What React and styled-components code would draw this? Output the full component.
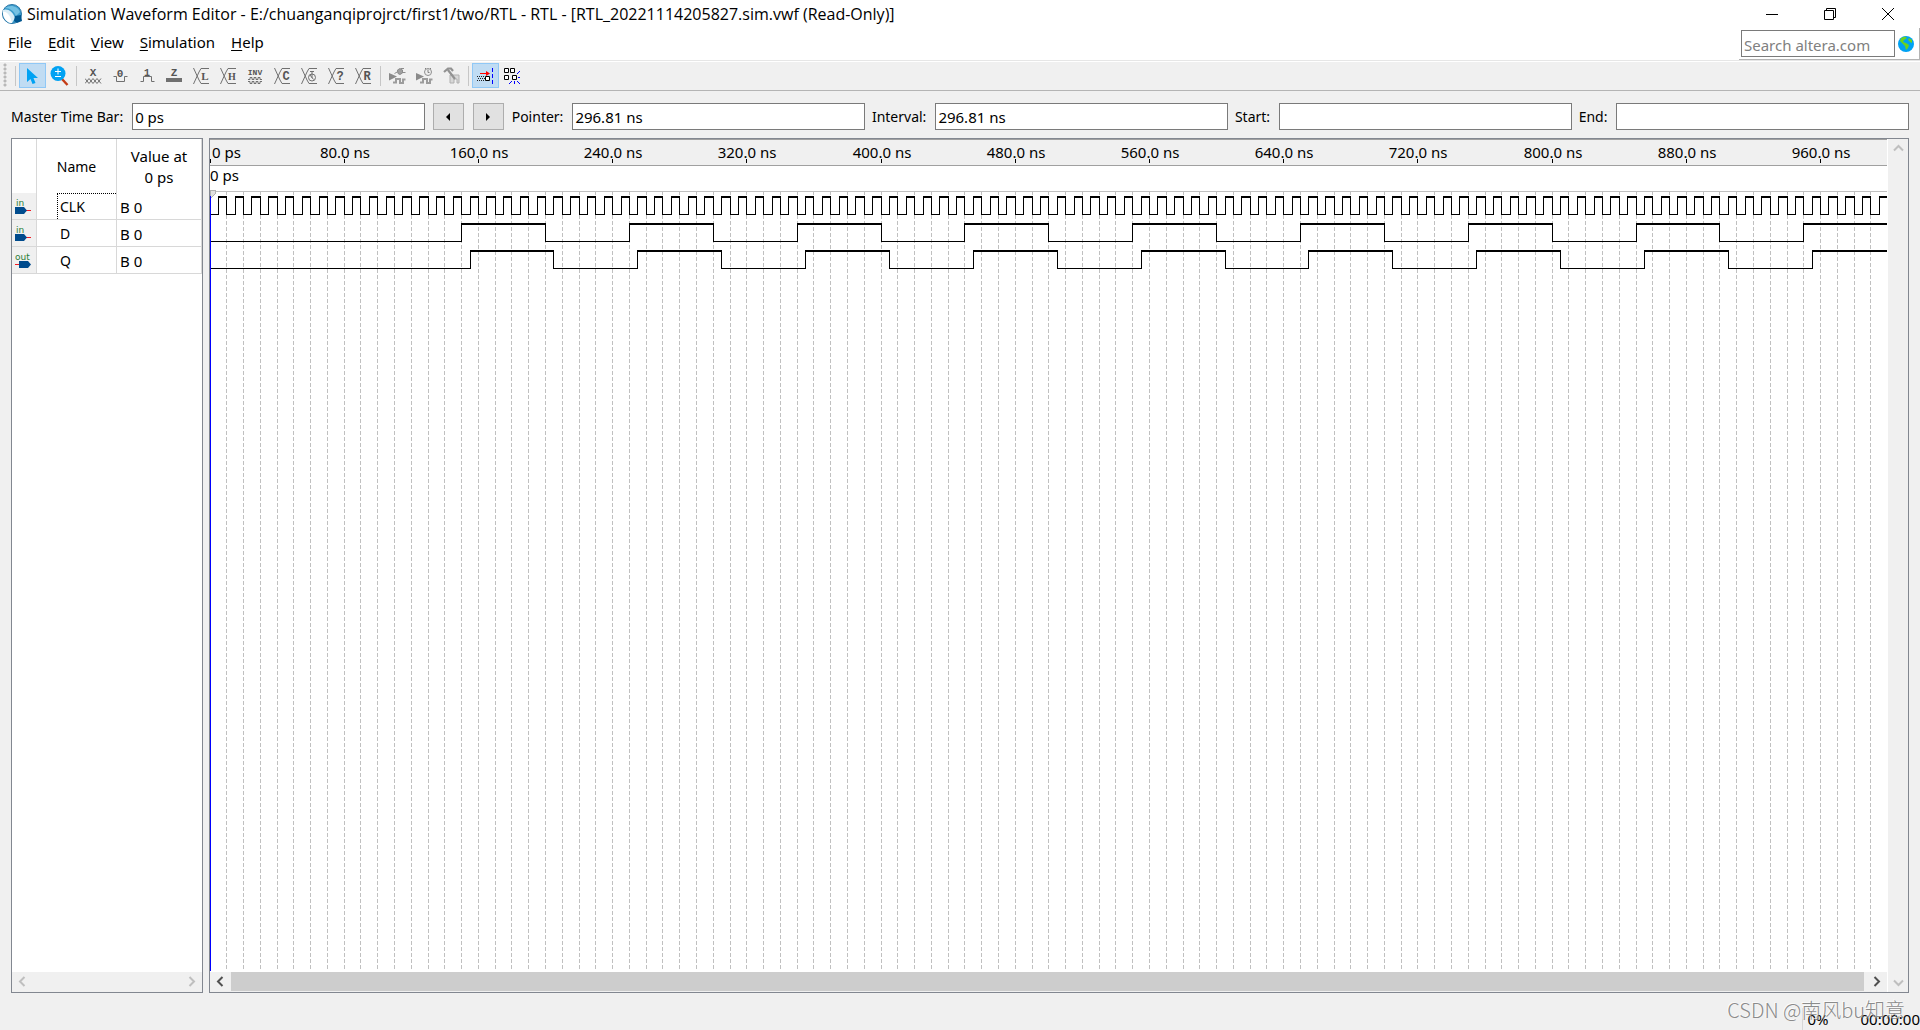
import React from 'react';
import styled, { createGlobalStyle } from 'styled-components';

const COLORS = {
  face: '#f0f0f0',
  frame: '#828790',
  input: '#7a7a7a',
  line: '#b4b4b4',
  cell: '#d8d8d8',
  grid: '#c0c0c0',
  icon: '#707070',
  pressed: '#c0dcf3',
  pressedBorder: '#90c8f6',
  blue: '#00a2f3',
  pin: '#004b8d',
};

const FONT = "'Noto Sans', 'Noto Sans CJK SC', sans-serif";

const GlobalStyle = createGlobalStyle`
  *, *::before, *::after {
    box-sizing: border-box;
  }
  body {
    margin: 0;
    background: ${COLORS.face};
    color: #000;
    font: 14px/20px ${FONT};
  }
  button, input {
    font: inherit;
    color: inherit;
    margin: 0;
  }
`;

const MENU = ['File', 'Edit', 'View', 'Simulation', 'Help'];

const SIGNALS = [
  { name: 'CLK', value: 'B 0', dir: 'in', first: 5, high: 5, period: 10 },
  { name: 'D', value: 'B 0', dir: 'in', first: 150, high: 50, period: 100 },
  { name: 'Q', value: 'B 0', dir: 'out', first: 155, high: 50, period: 100 },
];

const END_TIME = 1000;

/* ---------- toolbar icons ---------- */

const Glyph = ({ children, size = 17 }) => (
  <svg width={size} height={size} viewBox={`0 0 ${size} ${size}`} fill="none" stroke={COLORS.icon} aria-hidden="true">
    {children}
  </svg>
);

const Letter = ({ x = 8, y = 9, size = 10, family = 'Liberation Mono', weight = 700, children }) => (
  <text x={x} y={y} fontSize={size} fontFamily={`'${family}', monospace`} fontWeight={weight} textAnchor="middle" fill="#555" stroke="none">
    {children}
  </text>
);

const Bus = ({ children }) => (
  <Glyph>
    <path d="M0.500 1L6 13L8 16.500H16M0.500 17L6 5L8 1.500H16" />
    {children}
  </Glyph>
);

const PulseBase = () => (
  <>
    <path d="M0 6V13.500L8 9.500Z" fill="#8a8a8a" stroke="none" />
    <path d="M4 15.500H7V12H11V16H14V12.500H16.500" stroke="#9c9c9c" strokeWidth="2" />
  </>
);

const ICONS = {
  select: (
    <Glyph>
      <path d="M3 1V15L6.500 12L8.500 17L11.500 16L9.500 11H14Z" fill={COLORS.blue} stroke="none" />
    </Glyph>
  ),
  zoom: (
    <svg width="19" height="21" viewBox="0 0 19 21" fill="none" aria-hidden="true">
      <path d="M12 14L17.500 20" stroke="#c43c16" strokeWidth="2.400" />
      <circle cx="8" cy="8.500" r="7.500" fill={COLORS.blue} />
      <path d="M5 6.500H11M8 3.500V9.500M5 11.500H11" stroke="#fff" />
    </svg>
  ),
  unknown: (
    <Glyph>
      <Letter size={11}>X</Letter>
      <path d="M0 11.500L4 16.500L8 11.500L12 16.500L16 11.500M0 16.500L4 11.500L8 16.500L12 11.500L16 16.500" />
    </Glyph>
  ),
  low: (
    <Glyph>
      <Letter y={10} size={11}>0</Letter>
      <path d="M1.500 9.500H4.500V14.500H12.500V9.500H15.500" />
    </Glyph>
  ),
  high: (
    <Glyph>
      <Letter y={9} size={10}>1</Letter>
      <path d="M1.500 14.500H4.500V9.500H12.500V14.500H15.500" />
    </Glyph>
  ),
  highZ: (
    <Glyph>
      <Letter size={11}>Z</Letter>
      <path d="M0 11H16V15H0Z" fill={COLORS.icon} stroke="none" />
    </Glyph>
  ),
  weakLow: <Bus><Letter x={12} y={13} size={11} family="Liberation Serif">L</Letter></Bus>,
  weakHigh: <Bus><Letter x={12} y={13} size={10} family="Liberation Serif">H</Letter></Bus>,
  invert: (
    <Glyph>
      <Letter y={8} size={8}>INV</Letter>
      <path d="M1 12.500H3V10.500H5V12.500H7V10.500H9V12.500H11V10.500H13V12.500H15M1 14.500H3V16.500H5V14.500H7V16.500H9V14.500H11V16.500H13V14.500H15" />
    </Glyph>
  ),
  count: <Bus><Letter x={12} y={13} size={12}>C</Letter></Bus>,
  clock: (
    <Bus>
      <circle cx="11" cy="10.500" r="3.500" />
      <path d="M11 4V11M9 4.500H13M9 8L12.500 12.500" />
    </Bus>
  ),
  arbitrary: <Bus><Letter x={12} y={13} size={12}>?</Letter></Bus>,
  random: <Bus><Letter x={12} y={13} size={12}>R</Letter></Bus>,
  functional: (
    <Glyph>
      <PulseBase />
      <path d="M5.500 6.500L9 4.500" stroke="#8c8c8c" />
      <path d="M8.500 3L11 1.500L13.500 3V6L11 7.500L9 6.500Z" fill="#a0a0a0" stroke="#8c8c8c" />
      <path d="M12 1.500H15M13 5.500H16.500" stroke="#8c8c8c" />
    </Glyph>
  ),
  timing: (
    <Glyph>
      <PulseBase />
      <circle cx="12" cy="5" r="3.500" fill="#eee" stroke="#909090" />
      <path d="M12 2.500V5.500H13.500M9 1L10 2M15 1L14 2" stroke="#808080" />
    </Glyph>
  ),
  testbench: (
    <Glyph>
      <path d="M7 16V8H16V16H14V12H11V16Z" fill="#d8d8d8" stroke="#b0b0b0" />
      <path d="M1 5L5 1.500H8L10 4M5 3L12 12" stroke="#929292" strokeWidth="2.200" />
    </Glyph>
  ),
  snapGrid: (
    <Glyph>
      <path d="M3 6.500H10" stroke="#f00" />
      <path d="M9 4L13 6.500L9 9Z" fill="#f00" stroke="none" />
      <path d="M0 9.500H8M0 13.500H8M1 11.500H8" stroke="#222" strokeDasharray="1 1" />
      <path d="M8.500 9.500H12.500V13.500H8.500Z" stroke="#000" fill="#fff" />
      <path d="M15.500 1V17" stroke="#00f" strokeDasharray="4 2" />
    </Glyph>
  ),
  snapEdge: (
    <Glyph>
      <path d="M0.500 1.500H4.500V5.500H0.500ZM6.500 1.500H10.500V5.500H6.500ZM0.500 8.500H4.500V12.500H0.500ZM8.500 8.500H12.500V12.500H8.500Z" stroke="#000" fill="#fff" />
      <path d="M13 7L16 4M14 10.500H16M13 14L16 17M10.500 14V17M8 14L5 17" stroke="#00f" />
    </Glyph>
  ),
};

const TOOL_GROUPS = [
  [
    ['select', 'Selection Tool', true],
    ['zoom', 'Zoom Tool'],
  ],
  [
    ['unknown', 'Forcing Unknown (X)'],
    ['low', 'Forcing Low (0)'],
    ['high', 'Forcing High (1)'],
    ['highZ', 'High Impedance (Z)'],
    ['weakLow', 'Weak Low (L)'],
    ['weakHigh', 'Weak High (H)'],
    ['invert', 'Invert'],
    ['count', 'Count Value'],
    ['clock', 'Overwrite Clock'],
    ['arbitrary', 'Arbitrary Value'],
    ['random', 'Random Values'],
  ],
  [
    ['functional', 'Run Functional Simulation'],
    ['timing', 'Run Timing Simulation'],
    ['testbench', 'Generate ModelSim Testbench'],
  ],
  [
    ['snapGrid', 'Snap to Grid', true],
    ['snapEdge', 'Snap to Transition'],
  ],
];

const AppIcon = () => (
  <svg width="22" height="22" viewBox="0 0 22 22" aria-hidden="true">
    <circle cx="11" cy="11" r="9.500" fill="#3b9ccc" stroke="#2b76a6" />
    <path d="M2 7C6 5 12 8 14 15L11 20C5 20 1 14 2 7Z" fill="#d9edf7" />
    <path d="M4 5C9 1 17 3 19 9L15 13C13 8 9 5 4 5Z" fill="#74c1e3" />
    <path d="M2 9C5 8 9 11 11 20C6 20 2 15 2 9Z" fill="#fff" />
    <path d="M14 13L20 12L21 18L16 20L13 18Z" fill="#00568f" />
  </svg>
);

const Globe = () => (
  <svg width="16" height="16" viewBox="0 0 16 16" aria-hidden="true">
    <circle cx="8" cy="8" r="8" fill="#00a2f3" />
    <path d="M3 2L7 0.500L9 2L6 4L5 6L8 7L11 9L10 12L8 14L7 10L4 7L2 5ZM11 2L14 4L14 7L12 6L10 4Z" fill="#6cd21e" />
  </svg>
);

const PinIcon = ({ dir }) => (
  <svg width="18" height="18" viewBox="0 0 18 18" role="img" aria-label={dir}>
    <text x={dir === 'in' ? 1 : 0} y="8" fontSize="9" fontFamily="'DejaVu Sans', sans-serif" fill="#2b7d35">{dir}</text>
    {dir === 'in' ? (
      <>
        <path d="M11 12.500H16" stroke="#f01c24" />
        <path d="M0 9H9L12 12.500L9 16H0Z" fill={COLORS.pin} />
      </>
    ) : (
      <>
        <path d="M0 12.500H5" stroke="#f01c24" />
        <path d="M4 9H13L16 12.500L13 16H4Z" fill={COLORS.pin} />
      </>
    )}
  </svg>
);

const CHEVRONS = {
  left: 'M7.500 1L3 5.500L7.500 10',
  right: 'M3.500 1L8 5.500L3.500 10',
  up: 'M1 7.500L5.500 3L10 7.500',
  down: 'M1 3.500L5.500 8L10 3.500',
};

const ScrollArrow = ({ to, active }) => (
  <ArrowButton type="button" aria-label={`Scroll ${to}`} disabled={!active}>
    <svg width="11" height="11" viewBox="0 0 11 11" fill="none" stroke={active ? '#505050' : '#bfbfbf'} strokeWidth="2">
      <path d={CHEVRONS[to]} />
    </svg>
  </ArrowButton>
);

/* ---------- waveforms ---------- */

function tracePath(signal, toX, top) {
  const low = top + 18.5;
  let d = `M0 ${low}`;
  let tops = '';
  for (let t = signal.first; t < END_TIME; t += signal.period) {
    const rise = toX(t) + 0.5;
    const stop = Math.min(t + signal.high, END_TIME);
    const fall = toX(stop) + 0.5;
    d += `H${rise}V${top}`;
    tops += `M${rise - 0.5} ${top + 1}H${fall + 0.5}`;
    d += stop < END_TIME ? `M${fall} ${top}V${low}` : '';
  }
  return { d, tops };
}

const Waveform = () => {
  const ref = React.useRef(null);
  const [size, setSize] = React.useState({ width: 0, height: 0 });

  React.useLayoutEffect(() => {
    const measure = () => {
      setSize({ width: ref.current.clientWidth, height: ref.current.clientHeight });
    };
    measure();
    const observer = new ResizeObserver(measure);
    observer.observe(ref.current);
    return () => observer.disconnect();
  }, []);

  const { width, height } = size;
  const toX = (t) => Math.floor((t * (width + 0.7)) / END_TIME);
  const gridTimes = Array.from({ length: 99 }, (_, i) => (i + 1) * 10);
  const rulerTimes = Array.from({ length: 12 }, (_, i) => (i + 1) * 80);

  return (
    <Canvas ref={ref}>
      <svg width={width} height={height} role="img" aria-label="Waveforms">
        <rect width={width} height="27" fill={COLORS.face} />
        <path d={`M0 0.5H${width}M0 26.5H${width}`} stroke="#a0a0a0" />
        <path d={`M0 52.5H${width}`} stroke={COLORS.grid} />
        <TimeText x="2" y="19">0 ps</TimeText>
        <TimeText x="0" y="42">0 ps</TimeText>
        <path d="M0.500 20V24" stroke="#000" />
        {rulerTimes.map((t) => (
          <React.Fragment key={t}>
            <TimeText x={toX(t) + 1} y="19" textAnchor="middle">{t}.0 ns</TimeText>
            <path d={`M${toX(t) + 0.5} 20V24`} stroke="#000" />
          </React.Fragment>
        ))}
        {gridTimes.map((t) => (
          <path key={t} d={`M${toX(t) + 0.5} 52V${height - 3}`} stroke={COLORS.grid} strokeDasharray="4 2" />
        ))}
        {SIGNALS.map((signal, i) => {
          const { d, tops } = tracePath(signal, toX, 57 + i * 27);
          return (
            <g key={signal.name} stroke="#000" fill="none">
              <path d={d} />
              <path d={tops} strokeWidth="2" />
            </g>
          );
        })}
        <path d="M0 51H5V55L2 58H0Z" fill="#e0e0e0" stroke="#b0b0b0" />
        <path d={`M0.5 57V${height - 1}`} stroke="#00f" />
      </svg>
    </Canvas>
  );
};

const Field = ({ label, value = '' }) => (
  <FieldLabel>
    {label}
    <TextBox defaultValue={value} />
  </FieldLabel>
);

const App = () => (
  <Window>
    <GlobalStyle />
    <TitleBar>
      <AppIcon />
      <Title>Simulation Waveform Editor - E:/chuanganqiprojrct/first1/two/RTL - RTL - [RTL_20221114205827.sim.vwf (Read-Only)]</Title>
      <CaptionButton type="button" aria-label="Minimize">
        <svg width="12" height="12" stroke="#000"><path d="M0 6.500H12" /></svg>
      </CaptionButton>
      <CaptionButton type="button" aria-label="Restore">
        <svg width="12" height="12" stroke="#000" fill="none"><path d="M0.500 2.500H9.500V11.500H0.500ZM2.500 2.500V0.500H11.500V9.500H9.500" /></svg>
      </CaptionButton>
      <CaptionButton type="button" aria-label="Close">
        <svg width="12" height="12" stroke="#000"><path d="M0 0L12 12M12 0L0 12" /></svg>
      </CaptionButton>
    </TitleBar>

    <MenuBar>
      <Menu>
        {MENU.map((item) => (
          <MenuButton key={item} type="button"><u>{item[0]}</u>{item.slice(1)}</MenuButton>
        ))}
      </Menu>
      <Search>
        <SearchBox type="text" aria-label="Search altera.com" placeholder="Search altera.com" />
        <GlobeButton type="button" aria-label="Search"><Globe /></GlobeButton>
      </Search>
    </MenuBar>

    <Toolbar role="toolbar">
      <Grip />
      {TOOL_GROUPS.map((group, i) => (
        <React.Fragment key={i}>
          <Separator />
          {group.map(([id, label, pressed]) => (
            <ToolButton key={id} type="button" aria-label={label} $pressed={pressed}>{ICONS[id]}</ToolButton>
          ))}
        </React.Fragment>
      ))}
    </Toolbar>

    <TimeBar>
      <Field label="Master Time Bar:" value="0 ps" />
      <StepButton type="button" aria-label="Previous transition">
        <svg width="12" height="10"><path d="M8 1V9L4 5Z" /></svg>
      </StepButton>
      <StepButton type="button" aria-label="Next transition">
        <svg width="12" height="10"><path d="M4 1V9L8 5Z" /></svg>
      </StepButton>
      <Field label="Pointer:" value="296.81 ns" />
      <Field label="Interval:" value="296.81 ns" />
      <Field label="Start:" />
      <Field label="End:" />
    </TimeBar>

    <Panels>
      <SignalPanel>
        <SignalTable>
          <thead>
            <tr>
              <HeadCell $width={25} />
              <HeadCell $width={80}>Name</HeadCell>
              <HeadCell $size={15}>Value at<br />0 ps</HeadCell>
            </tr>
          </thead>
          <tbody>
            {SIGNALS.map((signal, i) => (
              <tr key={signal.name}>
                <PinCell><PinIcon dir={signal.dir} /></PinCell>
                <NameCell><SignalName $focused={i === 0}>{signal.name}</SignalName></NameCell>
                <ValueCell>{signal.value}</ValueCell>
              </tr>
            ))}
          </tbody>
        </SignalTable>
        <ScrollRow>
          <ScrollArrow to="left" />
          <ScrollArrow to="right" />
        </ScrollRow>
      </SignalPanel>

      <WavePanel>
        <WaveMain>
          <Waveform />
          <ScrollRow>
            <ScrollArrow to="left" active />
            <Thumb />
            <ScrollArrow to="right" active />
          </ScrollRow>
        </WaveMain>
        <ScrollColumn>
          <ScrollArrow to="up" />
          <ScrollArrow to="down" />
        </ScrollColumn>
      </WavePanel>
    </Panels>

    <StatusBar>
      <Progress>0%</Progress>
      <span>00:00:00</span>
      <Watermark>CSDN @南风bu知意</Watermark>
    </StatusBar>
  </Window>
);

const Window = styled.div`
  display: flex;
  flex-direction: column;
  min-height: 100vh;
`

const TitleBar = styled.header`
  display: flex;
  align-items: center;
  height: 28px;
  padding: 0 3px 0 1px;
  background: #fff;
`
const Title = styled.h1`
  flex: 1;
  margin: 0;
  padding-left: 4px;
  font-family: 'Open Sans', ${FONT};
  font-size: 16px;
  font-weight: 400;
  white-space: nowrap;
`
const CaptionButton = styled.button`
  display: grid;
  place-items: center;
  width: 58px;
  height: 28px;
  padding: 0;
  border: none;
  background: none;

  &:hover {
    background: #e5e5e5;
  }
`

const MenuBar = styled.div`
  display: flex;
  justify-content: space-between;
  height: 33px;
  background: #fff;
  border-bottom: 1px solid #e6e6e6;
`
const Menu = styled.nav`
  display: flex;
  gap: 16px;
  padding: 4px 8px;
`
const MenuButton = styled.button`
  height: 20px;
  padding: 0;
  border: none;
  background: none;
  font-size: 15px;

  u {
    text-underline-offset: 2px;
  }
`
const Search = styled.div`
  display: flex;
  align-items: center;
  height: 32px;
  padding-left: 2px;
  border-right: 1px solid ${COLORS.line};
  border-bottom: 1px solid ${COLORS.line};
`
const SearchBox = styled.input`
  width: 154px;
  height: 27px;
  padding: 2px 2px 0;
  border: 1px solid ${COLORS.input};
  background: #fff;
  font-size: 15px;

  &::placeholder {
    color: #808080;
  }
`
const GlobeButton = styled.button`
  display: grid;
  padding: 0 5px 0 3px;
  border: none;
  background: none;
`

const Toolbar = styled.div`
  display: flex;
  height: 30px;
  padding: 1px 0 0 3px;
  border-top: 1px solid #fff;
  border-bottom: 1px solid ${COLORS.line};
`
const Grip = styled.div`
  width: 9px;
  height: 24px;
  background: radial-gradient(circle, #b8b8b8 1px, transparent 2px) 0 0 / 4px 4px repeat-y;
`
const Separator = styled.div`
  width: 1px;
  height: 20px;
  margin: 3px 3px 0;
  background: #c6c6c6;
`
const ToolButton = styled.button`
  display: grid;
  place-items: center;
  width: 27px;
  height: 25px;
  padding: 0;
  border: 1px solid ${(p) => (p.$pressed ? COLORS.pressedBorder : 'transparent')};
  background: ${(p) => (p.$pressed ? COLORS.pressed : 'transparent')};
`

const TimeBar = styled.div`
  display: flex;
  align-items: center;
  gap: 7px;
  padding: 12px 11px 8px;
`
const FieldLabel = styled.label`
  display: flex;
  flex: 1 1 auto;
  align-items: center;
  gap: 9px;
  line-height: 22px;
  white-space: nowrap;
`
const TextBox = styled.input`
  flex: 1;
  width: 100px;
  min-width: 0;
  height: 27px;
  padding: 1px 2px 0;
  border: 1px solid ${COLORS.input};
  background: #fff;
  font-size: 15px;
`
const StepButton = styled.button`
  display: grid;
  place-items: center;
  width: 31px;
  height: 27px;
  margin: 0 1px;
  padding: 0;
  border: 1px solid #adadad;
  background: #e1e1e1;
`

const Panels = styled.main`
  display: flex;
  flex: 1;
  gap: 6px;
  padding: 0 11px;
`
const SignalPanel = styled.section`
  display: flex;
  flex-direction: column;
  justify-content: space-between;
  width: 192px;
  border: 1px solid ${COLORS.frame};
  background: #fff;
`
const SignalTable = styled.table`
  width: 100%;
  table-layout: fixed;
  border-collapse: separate;
  border-spacing: 0;

  th, td {
    border-right: 1px solid ${COLORS.cell};
  }
  td {
    height: 27px;
    border-bottom: 1px solid ${COLORS.cell};
  }
`
const HeadCell = styled.th`
  width: ${(p) => (p.$width ? p.$width + 'px' : 'auto')};
  height: 54px;
  padding: 1px 0 0;
  font-size: ${(p) => p.$size || 14}px;
  font-weight: 400;
  line-height: 21px;
`
const PinCell = styled.td`
  padding: 2px 0 0 3px;
  background: ${COLORS.face};
  line-height: 0;
`
const NameCell = styled.td`
  padding: 0 0 0 20px;
`
const SignalName = styled.div`
  height: 26px;
  padding: 3px 0 0 2px;
  border: 1px dotted ${(p) => (p.$focused ? '#000' : 'transparent')};
  border-width: 1px 0 0 1px;
`
const ValueCell = styled.td`
  padding: 2px 0 0 3px;
  font-size: 15px;
`

const WavePanel = styled.section`
  display: flex;
  flex: 1;
  min-width: 0;
  border: 1px solid ${COLORS.frame};
  background: #fff;
`
const WaveMain = styled.div`
  display: flex;
  flex: 1;
  flex-direction: column;
  min-width: 0;
`
const Canvas = styled.div`
  flex: 1;
  min-height: 200px;
  overflow: hidden;
  contain: size;

  svg {
    display: block;
    shape-rendering: crispEdges;
  }
`
const TimeText = styled.text`
  font-size: 15px;
`
const ScrollRow = styled.div`
  display: flex;
  justify-content: space-between;
  height: 20px;
  padding-right: 1px;
  background: ${COLORS.face};
`
const ScrollColumn = styled.div`
  display: flex;
  flex-direction: column;
  justify-content: space-between;
  width: 21px;
  border-left: 1px solid #fff;
  background: ${COLORS.face};
`
const ArrowButton = styled.button`
  display: grid;
  place-items: center;
  width: 20px;
  height: 19px;
  padding: 0;
  border: none;
  background: none;
`
const Thumb = styled.div`
  flex: 1;
  height: 19px;
  margin: 0 2px 0 1px;
  background: #cdcdcd;
`

const StatusBar = styled.footer`
  position: relative;
  display: flex;
  align-items: flex-end;
  justify-content: flex-end;
  gap: 32px;
  height: 37px;
  font-size: 15px;
  line-height: 22px;
`
const Progress = styled.span`
  padding-left: 4px;
  border-left: 1px solid #d7d7d7;
`
const Watermark = styled.div`
  position: absolute;
  right: 15px;
  bottom: 7px;
  color: rgba(125, 125, 125, 0.9);
  font: 300 20px/26px 'Noto Sans CJK SC', sans-serif;
  text-shadow: -1px -1px 0 rgba(255, 255, 255, 0.7);
  white-space: nowrap;
`

export default App;
